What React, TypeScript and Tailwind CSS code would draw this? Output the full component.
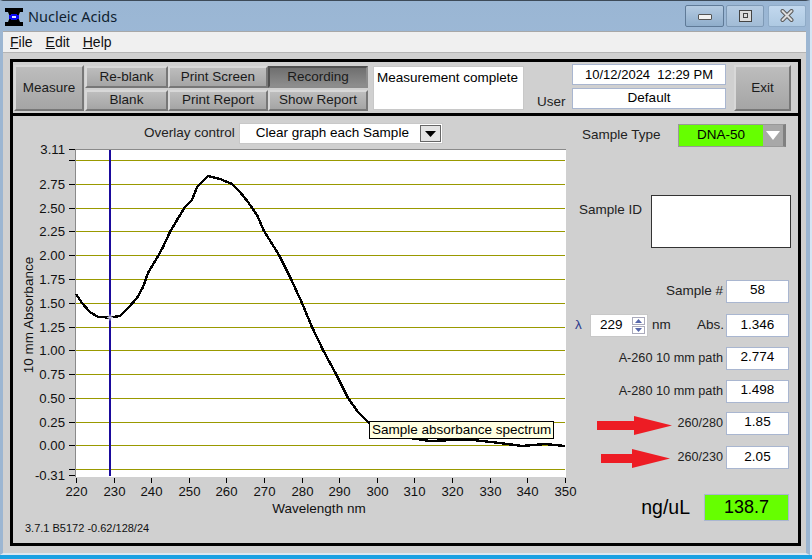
const yTicks = [
  ['3.11', 149], ['', 160], ['2.75', 184], ['2.50', 208], ['2.25', 231], ['2.00', 255], ['1.75', 279],
  ['1.50', 303], ['1.25', 327], ['1.00', 350], ['0.75', 374], ['0.50', 398], ['0.25', 422], ['0.00', 445],
  ['', 469], ['-0.31', 475],
] as const;
const gridLines = [160, 184, 208, 231, 255, 279, 303, 327, 350, 374, 398, 422, 445, 469];
const xTicks = [220, 230, 240, 250, 260, 270, 280, 290, 300, 310, 320, 330, 340, 350];

const spectrum =
  '76,294 82,303 90,312 98,317 110,317.5 120,316 128,308 137,298 143,287 148,273 157,258 163,247 170,232 177,220 185,207 192,200 197,187 202,182 208,176 220,179 232,184 240,192 248,202 257,215 264,231 279,255 291,279 302,303 312,327 323,350 336,374 348,398 358,412 368,422 385,432 410,438 430,441 453,440 473,440 500,443 522,446 545,444 565,446';

const Chart = () => (
  <svg className="absolute left-0 top-0" width="570" height="430" viewBox="0 0 570 430">
    <g transform="translate(-13,-116)" fontFamily="Liberation Sans, sans-serif" fontSize="13.2" fill="#111">
      <rect x="75" y="149" width="491" height="328" fill="#fff" />
      <path d="M75.500 149V477M75 149.500H566" stroke="#8a8a8a" strokeWidth="1" fill="none" />
      {gridLines.map((y) => (
        <line key={y} x1="76" x2="565" y1={y + 0.5} y2={y + 0.5} stroke="#999900" strokeWidth="1" />
      ))}
      {yTicks.map(([label, y]) => (
        <g key={y}>
          <line x1="69" x2="75" y1={y + 0.5} y2={y + 0.5} stroke="#000" strokeWidth="1" />
          <text x="65" y={y + 5} textAnchor="end">{label}</text>
        </g>
      ))}
      {xTicks.map((v) => {
        const x = Math.round(76 + (v - 220) * 3.76);
        return (
          <g key={v}>
            <line x1={x + 0.5} x2={x + 0.5} y1="478" y2="483" stroke="#000" strokeWidth="1" />
            <text x={x + 0.5} y="496" textAnchor="middle">{v}</text>
          </g>
        );
      })}
      <line x1="110" x2="110" y1="150" y2="476" stroke="#1a0a9c" strokeWidth="2" />
      <polyline points={spectrum} fill="none" stroke="#000" strokeWidth="2.400" strokeLinejoin="round" shapeRendering="crispEdges" />
      <path d="M107 317.500h6M110 314.500v6M108 315.500l4 4M112 315.500l-4 4" stroke="#c8c8e8" strokeWidth="1" />
      <text x="319" y="513" textAnchor="middle" fontSize="13.500">Wavelength nm</text>
      <text transform="translate(33,315) rotate(-90)" textAnchor="middle" fontSize="13.500">10 mm Absorbance</text>
      <text x="25" y="532" fontSize="11">3.7.1 B5172 -0.62/128/24</text>
    </g>
  </svg>
);

const ToolButton = ({ label, dark, className }: { label: string; dark?: boolean; className: string }) => (
  <button
    className={`flex shrink-0 items-center justify-center border-2 text-[13.5px] text-[#1a1a1a] ${
      dark
        ? 'border-t-[#4f4f4f] border-l-[#4f4f4f] border-b-[#8c8c8c] border-r-[#8c8c8c] bg-gradient-to-b from-[#6f6f6f] to-[#8e8e8e]'
        : 'border-t-[#d8d8d8] border-l-[#d8d8d8] border-b-[#777] border-r-[#777] bg-gradient-to-b from-[#bdbdbd] to-[#a5a5a5]'
    } ${className}`}
  >
    {label}
  </button>
);

const ValueBox = ({ children, className }: { children: string; className: string }) => (
  <div className={`flex shrink-0 items-center justify-center whitespace-pre border border-[#a9b6d0] bg-white text-[13.5px] text-black ${className}`}>
    {children}
  </div>
);

const ResultRow = ({ label, value, mt, small }: { label: string; value: string; mt: string; small?: boolean }) => (
  <div className={`flex items-center justify-end ${mt}`}>
    <span className={`${small ? 'text-[12.7px]' : 'text-[13.5px]'} text-[#222]`}>{label}</span>
    <ValueBox className="ml-[3px] h-[23px] w-[63px] pb-[2px]">{value}</ValueBox>
  </div>
);

const Arrow = ({ width }: { width: number }) => (
  <svg width={width} height="19" viewBox={`0 0 ${width} 19`}>
    <polygon points={`0,5 ${width - 38},5 ${width - 38},0 ${width},9.500 ${width - 38},19 ${width - 38},14 0,14`} fill="#ed1c24" />
  </svg>
);

export default function App() {
  return (
    <div className="h-[559px] w-[812px] overflow-hidden bg-[#d6e6f4] font-['Liberation_Sans',sans-serif]">
      <div className="flex h-[555px] w-[810px] flex-col border-b-2 border-l-[3px] border-r-[4px] border-t border-[#9cb6d2] border-b-[#dde7f0] border-t-[#3d4a58] bg-gradient-to-b from-[#9ab6d4] to-[#b9d2ea]">
        <div className="flex h-[30px] shrink-0 items-center pl-[2px] pt-[2px]">
          <svg width="18" height="20" viewBox="0 0 18 20">
            <rect x="0" y="1" width="18" height="4" fill="#000" />
            <rect x="0" y="15" width="18" height="4" fill="#000" />
            <polygon points="3,5 15,5 13,10 15,15 3,15 5,10" fill="#000" />
            <rect x="4" y="8" width="10" height="4" fill="#0a0af0" />
            <rect x="6" y="7" width="6" height="6" fill="#0a0af0" />
            <rect x="7" y="9" width="4" height="2" fill="#dfe6ff" />
          </svg>
          <span className="ml-[5px] font-['Noto_Sans',sans-serif] text-[14.5px] text-[#0f1e30]">Nucleic Acids</span>
          <div className="mb-[3px] ml-auto flex gap-[2px]">
            <div className="flex h-[22px] w-[39px] items-center justify-center rounded-[2px] border border-[#5f7a97] bg-gradient-to-b from-[#b5cbe2] to-[#8fadcb]">
              <div className="mt-[3px] h-[6px] w-[14px] rounded-[1px] border border-[#555] bg-[#f2f2f2]" />
            </div>
            <div className="flex h-[22px] w-[38px] items-center justify-center rounded-[2px] border border-[#7f9ab6] bg-gradient-to-b from-[#b5cbe2] to-[#a2bcd6]">
              <div className="flex h-[12px] w-[13px] items-center justify-center border border-[#444] bg-[#ddd]">
                <div className="h-[5px] w-[5px] border border-[#444]" />
              </div>
            </div>
            <div className="ml-[2px] flex h-[22px] w-[38px] items-center justify-center rounded-[2px] border border-[#8fabc7] bg-gradient-to-b from-[#c2d8ee] to-[#aec9e2]">
              <svg width="14" height="13" viewBox="0 0 14 13">
                <path d="M2.500 2l9 9M11.500 2l-9 9" stroke="#5a5a5a" strokeWidth="4" strokeLinecap="round" />
                <path d="M2.500 2l9 9M11.500 2l-9 9" stroke="#dcdcdc" strokeWidth="2" strokeLinecap="round" />
              </svg>
            </div>
          </div>
        </div>
        <div className="flex h-[22px] shrink-0 items-center gap-[13px] border-y border-[#a8a8a8] border-b-[#b5b5b5] bg-[#f0f0f0] pl-[7px] pt-[1px] text-[14px] text-[#111]">
          <span><u>F</u>ile</span>
          <span><u>E</u>dit</span>
          <span><u>H</u>elp</span>
        </div>
        <div className="flex min-h-0 flex-1 flex-col bg-[#d0d0d0] pb-[7px] pl-[7px] pr-[5px] pt-[6px]">
          <div className="flex min-h-0 flex-1 flex-col border-[3px] border-black">
            <div className="flex h-[54px] shrink-0 items-start border-b-[3px] border-black px-[1px] pt-[3px]">
              <ToolButton label="Measure" className="h-[46px] w-[70px]" />
              <div className="ml-[1px] mt-[1px] grid shrink-0 grid-cols-[83px_100px_100px] grid-rows-[22px_21px] gap-y-[2px]">
                <ToolButton label="Re-blank" className="" />
                <ToolButton label="Print Screen" className="" />
                <ToolButton label="Recording" dark className="" />
                <ToolButton label="Blank" className="" />
                <ToolButton label="Print Report" className="" />
                <ToolButton label="Show Report" className="" />
              </div>
              <div className="ml-[5px] mt-[1px] h-[44px] w-[151px] shrink-0 border border-[#c8c8c8] bg-white pl-[3px] pt-[1px] text-[13.5px] text-black">
                Measurement complete
              </div>
              <span className="ml-[13px] mt-[27px] w-[35px] shrink-0 text-[13.5px] text-[#222]">User</span>
              <div className="-mt-[1px] flex shrink-0 flex-col gap-[3px]">
                <ValueBox className="h-[21px] w-[154px] text-[13px]">10/12/2024  12:29 PM</ValueBox>
                <ValueBox className="h-[21px] w-[154px]">Default</ValueBox>
              </div>
              <ToolButton label="Exit" className="ml-[8px] h-[46px] w-[57px]" />
            </div>
            <div className="relative flex min-h-0 flex-1">
              <div className="relative w-[560px] shrink-0">
                <Chart />
                <div className="absolute left-[131px] top-[7px] flex items-center">
                  <span className="text-[13.5px] text-[#222]">Overlay control</span>
                  <div className="ml-[4px] flex h-[21px] w-[204px] items-center border border-[#c8c8c8] bg-white pl-[16px] pr-[1px] text-[13.5px]">
                    Clear graph each Sample
                    <span className="ml-auto flex h-[17px] w-[21px] items-center justify-center border border-[#666] bg-[#e4e4e4]">
                      <svg width="11" height="6" viewBox="0 0 11 6"><polygon points="0,0 11,0 5.500,6" fill="#000" /></svg>
                    </span>
                  </div>
                </div>
                <div className="absolute left-[356px] top-[305px] h-[18px] whitespace-nowrap border border-black bg-[#ffffe1] px-[2px] text-[13.5px] leading-[16px] text-black">
                  Sample absorbance spectrum
                </div>
              </div>
              <div className="flex flex-1 flex-col pr-[9px]">
                <div className="mt-[8px] flex items-center">
                  <span className="ml-[9px] w-[96px] whitespace-nowrap text-[13.5px] text-[#222]">Sample Type</span>
                  <div className="flex h-[23px] w-[108px] items-center border-y border-l border-r-[3px] border-[#999] border-r-[#808080]">
                    <span className="flex h-full w-[84px] items-center justify-center bg-[#66ff00] text-[13.5px]">DNA-50</span>
                    <span className="flex h-full flex-1 items-center justify-center bg-[#a8a8a8]">
                      <svg width="14" height="9" viewBox="0 0 14 9"><polygon points="0,0 14,0 7,9" fill="#fff" /></svg>
                    </span>
                  </div>
                </div>
                <div className="mt-[48px] flex items-start">
                  <span className="ml-[6px] mt-[5px] w-[72px] whitespace-nowrap text-[13.5px] text-[#222]">Sample ID</span>
                  <div className="h-[53px] w-[140px] border border-[#333] bg-white" />
                </div>
                <div className="mr-[2px] mt-[32px] flex flex-col">
                  <ResultRow label="Sample #" value="58" mt="" />
                  <div className="mt-[11px] flex items-center">
                    <span className="ml-[2px] w-[8px] text-[13.5px] text-[#2b3a8c]">λ</span>
                    <div className="ml-[7px] flex h-[23px] w-[58px] items-center border border-[#c8c8c8] bg-white pl-[9px] text-[13.5px]">
                      229
                      <span className="ml-auto mr-[2px] flex flex-col gap-px">
                        <span className="flex h-[8px] w-[13px] items-center justify-center border border-[#aab]">
                          <svg width="7" height="4" viewBox="0 0 7 4"><polygon points="3.500,0 7,4 0,4" fill="#5566aa" /></svg>
                        </span>
                        <span className="flex h-[8px] w-[13px] items-center justify-center border border-[#aab]">
                          <svg width="7" height="4" viewBox="0 0 7 4"><polygon points="0,0 7,0 3.500,4" fill="#5566aa" /></svg>
                        </span>
                      </span>
                    </div>
                    <span className="ml-[4px] text-[13.5px] text-[#222]">nm</span>
                    <span className="ml-auto text-[13.5px] text-[#222]">Abs.</span>
                    <ValueBox className="ml-[2px] h-[23px] w-[63px]">1.346</ValueBox>
                  </div>
                  <ResultRow label="A-260 10 mm path" value="2.774" mt="mt-[10px]" small />
                  <ResultRow label="A-280 10 mm path" value="1.498" mt="mt-[10px]" small />
                  <div className="mt-[9px] flex items-center justify-end">
                    <span className="mr-[5px] mt-[4px] flex"><Arrow width={75} /></span>
                    <span className="text-[12.6px] text-[#222]">260/280</span>
                    <ValueBox className="ml-[3px] h-[23px] w-[63px] pb-[2px]">1.85</ValueBox>
                  </div>
                  <div className="mt-[11px] flex items-center justify-end">
                    <span className="mr-[7px] mt-[2px] flex"><Arrow width={69} /></span>
                    <span className="text-[12.6px] text-[#222]">260/230</span>
                    <ValueBox className="ml-[3px] h-[23px] w-[63px]">2.05</ValueBox>
                  </div>
                  <div className="mt-[24px] flex items-center justify-end">
                    <span className="mr-[14px] text-[19.5px] text-black">ng/uL</span>
                    <div className="flex h-[27px] w-[85px] items-center justify-center border border-[#a9b6d0] bg-[#66ff00] text-[18px] text-black">138.7</div>
                  </div>
                </div>
              </div>
            </div>
          </div>
        </div>
      </div>
      <div className="h-[4px] bg-[#1ba1e2]" />
    </div>
  );
}
